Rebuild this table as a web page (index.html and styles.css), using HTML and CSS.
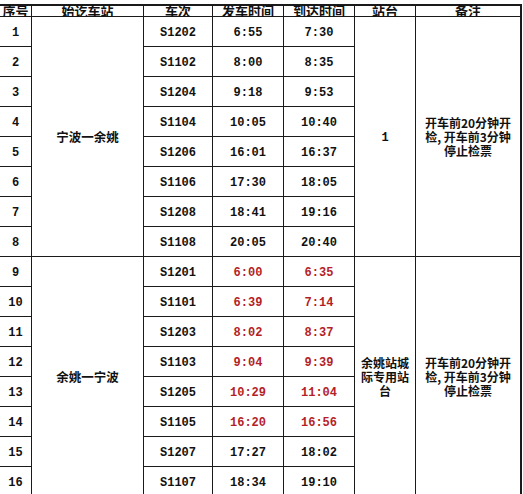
FILE: index.html
```html
<!DOCTYPE html>
<html lang="zh">
<head>
<meta charset="utf-8">
<link rel="stylesheet" href="styles.css">
</head>
<body>
<div class="sheet">
  <div class="h">序号</div>
  <div class="h">始讫车站</div>
  <div class="h">车次</div>
  <div class="h">发车时间</div>
  <div class="h">到达时间</div>
  <div class="h">站台</div>
  <div class="h">备注</div>

  <div class="c n r1">1</div>
  <div class="c cn route g1">宁波一余姚</div>
  <div class="c n r1">S1202</div><div class="c n r1">6:55</div><div class="c n r1">7:30</div>
  <div class="c n plat g1">1</div>
  <div class="c cn note g1"><span class="ln">开车前20分钟开</span><span class="ln">检, 开车前3分钟</span><span class="ln">停止检票</span></div>

  <div class="c n">2</div><div class="c n">S1102</div><div class="c n">8:00</div><div class="c n">8:35</div>
  <div class="c n">3</div><div class="c n">S1204</div><div class="c n">9:18</div><div class="c n">9:53</div>
  <div class="c n">4</div><div class="c n">S1104</div><div class="c n">10:05</div><div class="c n">10:40</div>
  <div class="c n">5</div><div class="c n">S1206</div><div class="c n">16:01</div><div class="c n">16:37</div>
  <div class="c n">6</div><div class="c n">S1106</div><div class="c n">17:30</div><div class="c n">18:05</div>
  <div class="c n">7</div><div class="c n">S1208</div><div class="c n">18:41</div><div class="c n">19:16</div>
  <div class="c n">8</div><div class="c n">S1108</div><div class="c n">20:05</div><div class="c n">20:40</div>

  <div class="c n r9">9</div>
  <div class="c cn route g2">余姚一宁波</div>
  <div class="c n r9">S1201</div><div class="c n red r9">6:00</div><div class="c n red r9">6:35</div>
  <div class="c cn plat g2"><span class="ln">余姚站城</span><span class="ln">际专用站</span><span class="ln">台</span></div>
  <div class="c cn note g2"><span class="ln">开车前20分钟开</span><span class="ln">检, 开车前3分钟</span><span class="ln">停止检票</span></div>

  <div class="c n">10</div><div class="c n">S1101</div><div class="c n red">6:39</div><div class="c n red">7:14</div>
  <div class="c n">11</div><div class="c n">S1203</div><div class="c n red">8:02</div><div class="c n red">8:37</div>
  <div class="c n">12</div><div class="c n">S1103</div><div class="c n red">9:04</div><div class="c n red">9:39</div>
  <div class="c n">13</div><div class="c n">S1205</div><div class="c n red">10:29</div><div class="c n red">11:04</div>
  <div class="c n">14</div><div class="c n">S1105</div><div class="c n red">16:20</div><div class="c n red">16:56</div>
  <div class="c n">15</div><div class="c n">S1207</div><div class="c n">17:27</div><div class="c n">18:02</div>
  <div class="c n">16</div><div class="c n">S1107</div><div class="c n">18:34</div><div class="c n">19:10</div>
</div>
</body>
</html>
```
FILE: styles.css
```css
html, body {
  margin: 0;
  padding: 0;
  background: #fff;
  overflow: hidden;
}
body {
  padding-top: 4px;
}
.sheet {
  display: grid;
  grid-template-columns: 31px 111px 68px 70px 70px 60px 104px;
  grid-template-rows: 10px repeat(16, 29px);
  gap: 1px;
  width: 520px;
  background: #1a1a1a;
  border-top: 2px solid #1a1a1a;
  border-right: 2px solid #1a1a1a;
  font-family: "Noto Sans CJK SC", "Noto Sans", sans-serif;
  font-weight: bold;
  color: #111;
}
.h, .c {
  background: #fff;
  display: flex;
  align-items: center;
  justify-content: center;
  text-align: center;
}
.h {
  font-size: 13px;
  line-height: 11px;
  overflow: visible;
  align-items: flex-end;
}
.n {
  font-family: "Liberation Mono", monospace;
  font-size: 12px;
  padding-top: 2px;
}
.red {
  color: #b41e26;
}
.cn {
  font-size: 12.5px;
  line-height: 15px;
}
.route {
  grid-column: 2;
}
.g1 {
  grid-row: 2 / span 8;
}
.g2 {
  grid-row: 10 / span 8;
}
.plat {
  grid-column: 6;
}
.note {
  grid-column: 7;
}
.plat, .note {
  flex-direction: column;
  font-size: 12px;
  line-height: 14px;
}
.ln {
  display: block;
  line-height: 14px;
  white-space: nowrap;
}
.plat.n {
  font-size: 12px;
}
```
